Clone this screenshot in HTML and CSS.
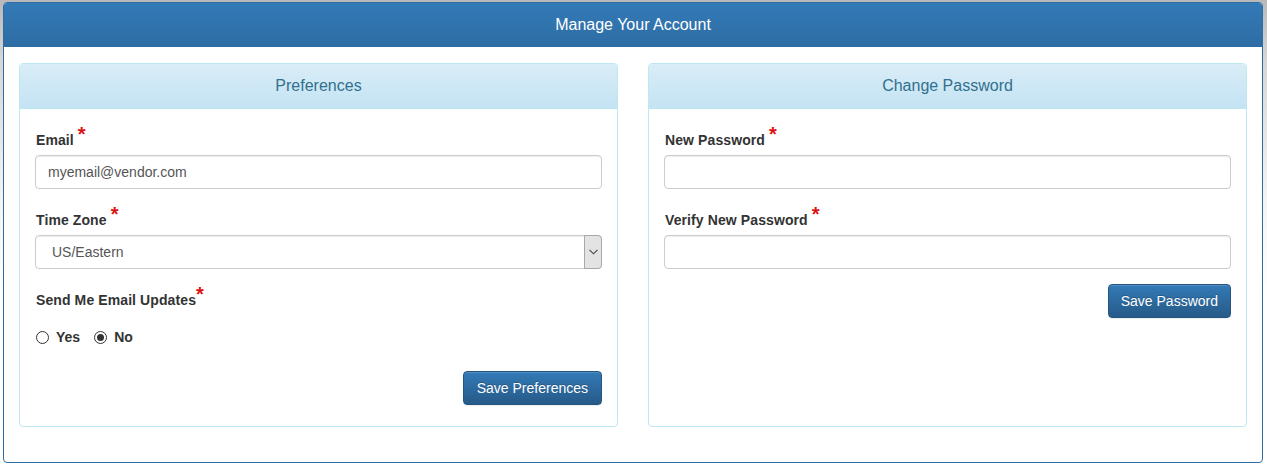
FILE: index.html
```html
<!DOCTYPE html>
<html>
<head>
<meta charset="utf-8">
<title>Manage Your Account</title>
<link rel="stylesheet" href="styles.css">
</head>
<body>
<div class="account">
  <div class="account-heading">Manage Your Account</div>
  <div class="account-body">
    <section class="card">
      <div class="card-heading">Preferences</div>
      <div class="card-body">
        <div class="form-group">
          <label class="field-label">Email <span class="req">*</span></label>
          <input class="control" type="text" value="myemail@vendor.com">
        </div>
        <div class="form-group">
          <label class="field-label">Time Zone <span class="req">*</span></label>
          <div class="select-wrap">
            <select class="control select">
              <option>US/Eastern</option>
            </select>
            <span class="select-arrow"><svg width="9" height="6" viewBox="0 0 9 6"><path d="M0.5 0.8 L4.5 4.8 L8.5 0.8" fill="none" stroke="#444" stroke-width="1.1"/></svg></span>
          </div>
        </div>
        <div class="form-group">
          <label class="field-label">Send Me Email Updates<span class="req">*</span></label>
          <div class="radios">
            <label class="radio"><input type="radio" name="upd"> Yes</label>
            <label class="radio"><input type="radio" name="upd" checked> No</label>
          </div>
        </div>
        <div class="actions">
          <button class="btn">Save Preferences</button>
        </div>
      </div>
    </section>
    <section class="card">
      <div class="card-heading">Change Password</div>
      <div class="card-body">
        <div class="form-group">
          <label class="field-label">New Password <span class="req">*</span></label>
          <input class="control" type="password">
        </div>
        <div class="form-group">
          <label class="field-label">Verify New Password <span class="req">*</span></label>
          <input class="control" type="password">
        </div>
        <div class="actions actions-tight">
          <button class="btn btn-narrow">Save Password</button>
        </div>
      </div>
    </section>
  </div>
</div>
</body>
</html>
```
FILE: styles.css
```css
html {
  background: linear-gradient(to bottom, #b9b9b9 0, #d6d6d6 60px, #f4f4f4 200px, #ffffff 300px);
  min-height: 100%;
}
body {
  margin: 2px 4px 0 3px;
  font-family: "Liberation Sans", Arial, Helvetica, sans-serif;
  font-size: 14px;
  color: #333;
}
.account {
  border: 1px solid #2e6da4;
  border-radius: 4px;
  background: #fff;
  height: 461px;
  box-sizing: border-box;
  overflow: hidden;
}
.account-heading {
  height: 43px;
  line-height: 43px;
  text-align: center;
  color: #fff;
  font-size: 16px;
  background: linear-gradient(to bottom, #337ab7 0%, #2e6da4 100%);
  border-bottom: 1px solid #2e6da4;
}
.account-body {
  padding: 16px 15px 15px;
  display: grid;
  grid-template-columns: 1fr 1fr;
  column-gap: 30px;
}
.card {
  border: 1px solid #bce8f1;
  border-radius: 4px;
  height: 364px;
  box-sizing: border-box;
  overflow: hidden;
  background: #fff;
}
.card-heading {
  height: 44px;
  line-height: 44px;
  text-align: center;
  font-size: 16px;
  color: #31708f;
  background: linear-gradient(to bottom, #d9edf7 0%, #c4e3f3 100%);
  border-bottom: 1px solid #bce8f1;
}
.card-body {
  padding: 15px;
}
.form-group {
  margin-bottom: 15px;
}
.field-label {
  display: block;
  padding-top: 6px;
  margin: 0 0 5px 1px;
  line-height: 20px;
  height: 20px;
  font-weight: bold;
  color: #333;
  letter-spacing: 0.1px;
}
.req {
  color: #dd1111;
  font-size: 20px;
  line-height: 0;
  position: relative;
  top: -4px;
}
.control {
  display: block;
  width: 100%;
  height: 34px;
  box-sizing: border-box;
  padding: 6px 12px;
  font-family: inherit;
  font-size: 14px;
  color: #555;
  background: #fff;
  border: 1px solid #ccc;
  border-radius: 4px;
  box-shadow: inset 0 1px 1px rgba(0,0,0,.075);
  outline: none;
}
.select-wrap {
  position: relative;
}
.select {
  appearance: none;
  -webkit-appearance: none;
  padding-left: 16px;
}
.select-arrow {
  position: absolute;
  right: 0;
  top: 0;
  width: 16px;
  height: 32px;
  background: #e3e3e3;
  border: 1px solid #a8a8a8;
  border-radius: 0 4px 4px 0;
  display: flex;
  align-items: center;
  justify-content: center;
}
.radios {
  display: flex;
  gap: 14px;
  margin-top: 17px;
  margin-left: 1px;
  height: 20px;
  align-items: center;
}
.radio {
  display: flex;
  align-items: center;
  gap: 7px;
  font-weight: bold;
  color: #333;
}
.radio input {
  appearance: none;
  -webkit-appearance: none;
  width: 13px;
  height: 13px;
  margin: 0;
  border: 1px solid #333;
  border-radius: 50%;
  background: #fff;
  box-sizing: border-box;
  position: relative;
}
.radio input:checked::after {
  content: "";
  position: absolute;
  left: 2px;
  top: 2px;
  width: 7px;
  height: 7px;
  border-radius: 50%;
  background: #333;
}
.actions {
  display: flex;
  justify-content: flex-end;
  margin-top: 24px;
}
.actions-tight {
  margin-top: 1px;
}
.btn {
  height: 34px;
  padding: 6px 13px;
  font-family: inherit;
  font-size: 14px;
  color: #fff;
  background: linear-gradient(to bottom, #337ab7 0%, #265a88 100%);
  border: 1px solid #245580;
  border-radius: 4px;
  box-shadow: inset 0 1px 0 rgba(255,255,255,.15), 0 1px 1px rgba(0,0,0,.075);
  text-shadow: 0 -1px 0 rgba(0,0,0,.2);
  cursor: pointer;
}
.btn-narrow {
  padding: 6px 12px;
}
```
